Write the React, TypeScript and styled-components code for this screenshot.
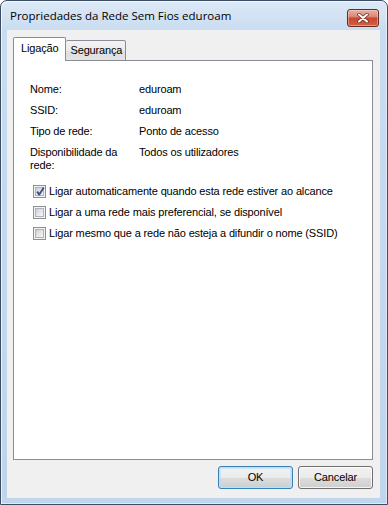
import React from "react";
import styled, { createGlobalStyle } from "styled-components";

const Global = createGlobalStyle`
  html, body { margin: 0; padding: 0; background: #ffffff; }
  body { width: 388px; height: 505px; overflow: hidden; }
  #root { width: 388px; height: 505px; }
`;

const Window = styled.div`
  box-sizing: border-box;
  width: 388px;
  height: 505px;
  border: 1px solid #3a4d63;
  border-radius: 7px 7px 0 0;
  background: linear-gradient(to bottom, #dce9f7 0px, #c9dcf0 30px, #bfd5ec 100%);
  box-shadow: inset 1px 1px 0 rgba(255, 255, 255, 0.7), inset -1px -1px 0 rgba(255, 255, 255, 0.5);
  display: flex;
  flex-direction: column;
  padding: 0 7px 6px 6px;
  font-family: "Liberation Sans", Arial, sans-serif;
  font-size: 11px;
  letter-spacing: -0.15px;
  color: #000;
`;

const TitleBar = styled.div`
  height: 29px;
  display: flex;
  align-items: flex-start;
  justify-content: space-between;
  padding-left: 3px;
`;

const Title = styled.div`
  font-family: "Open Sans", "Noto Sans", sans-serif;
  font-size: 11.5px;
  letter-spacing: 0;
  padding-top: 4px;
  line-height: 21px;
  color: #000;
  white-space: nowrap;
`;

const CloseButton = styled.div`
  box-sizing: border-box;
  width: 32px;
  height: 18px;
  margin-top: 8px;
  margin-right: 1px;
  border: 1px solid #6b2a20;
  border-radius: 3px;
  background: linear-gradient(to bottom, #eab0a2 0%, #d98a78 40%, #c8482f 52%, #d0603f 100%);
  box-shadow: inset 0 0 0 1px rgba(255, 220, 210, 0.45);
  display: flex;
  align-items: center;
  justify-content: center;
`;

const Client = styled.div`
  flex: 1;
  background: #f0f0f0;
  display: flex;
  flex-direction: column;
  padding: 7px 7px 9px 6px;
  min-height: 0;
`;

const TabRow = styled.div`
  height: 24px;
  display: flex;
  align-items: flex-end;
  margin-bottom: -1px;
  position: relative;
  z-index: 1;
`;

const Tab = styled.div<{ $active?: boolean }>`
  box-sizing: border-box;
  height: ${(p) => (p.$active ? "24px" : "21px")};
  padding: ${(p) => (p.$active ? "3px 7px 0 7px" : "2px 3px 0 4px")};
  border: 1px solid #898c95;
  border-bottom: ${(p) => (p.$active ? "none" : "1px solid #898c95")};
  border-left: ${(p) => (p.$active ? "1px solid #898c95" : "none")};
  border-radius: 2px 2px 0 0;
  background: ${(p) =>
    p.$active ? "#ffffff" : "linear-gradient(to bottom, #f3f3f3 0%, #ebebeb 50%, #dedede 51%, #e4e4e4 100%)"};
  line-height: 14px;
  white-space: nowrap;
`;

const Panel = styled.div`
  flex: 1;
  background: #ffffff;
  border: 1px solid #898c95;
  padding: 22px 16px 0 16px;
  display: flex;
  flex-direction: column;
`;

const InfoGrid = styled.div`
  display: grid;
  grid-template-columns: 109px auto;
  row-gap: 8px;
  line-height: 13px;
`;

const Label = styled.div``;
const Value = styled.div``;

const CheckList = styled.div`
  display: flex;
  flex-direction: column;
  gap: 8px;
  margin-top: 13px;
`;

const CheckRow = styled.label`
  display: flex;
  align-items: center;
  gap: 3px;
  height: 13px;
  line-height: 13px;
  padding-left: 3px;
`;

const Box = styled.span`
  box-sizing: border-box;
  width: 13px;
  height: 13px;
  border: 1px solid #8e8f8f;
  background: #f4f4f4;
  padding: 1px;
  display: inline-flex;
  position: relative;
  flex: none;
`;

const BoxInner = styled.span`
  box-sizing: border-box;
  flex: 1;
  border: 1px solid #aeb3b9;
  background: linear-gradient(135deg, #cbcfd5 0%, #e8e9eb 60%, #f6f6f6 100%);
`;

const Mark = styled.svg`
  position: absolute;
  left: 1px;
  top: 0px;
`;

const ButtonRow = styled.div`
  display: flex;
  justify-content: flex-end;
  gap: 5px;
  margin-top: 6px;
`;

const Button = styled.div<{ $default?: boolean }>`
  box-sizing: border-box;
  width: 75px;
  height: 23px;
  border: 1px solid ${(p) => (p.$default ? "#3c7fb1" : "#707070")};
  border-radius: 3px;
  background: linear-gradient(to bottom, #f2f2f2 0%, #ebebeb 50%, #dddddd 51%, #cfcfcf 100%);
  box-shadow: ${(p) =>
    p.$default ? "inset 0 0 0 1px #b7e3f8, inset 0 0 0 2px rgba(170,220,245,0.5)" : "inset 0 0 0 1px rgba(255,255,255,0.75)"};
  display: flex;
  align-items: center;
  justify-content: center;
  line-height: 13px;
`;

const Check: React.FC<{ checked?: boolean; children: React.ReactNode }> = ({ checked, children }) => (
  <CheckRow>
    <Box>
      <BoxInner />
      {checked && (
        <Mark width="11" height="11" viewBox="0 0 11 11">
          <path d="M2.2 5.6 L4.3 8.6 L8.8 1.6" fill="none" stroke="#3d5287" strokeWidth="1.9" strokeLinejoin="round" />
        </Mark>
      )}
    </Box>
    <span>{children}</span>
  </CheckRow>
);

export default function App() {
  return (
    <>
      <Global />
      <Window>
        <TitleBar>
          <Title>Propriedades da Rede Sem Fios eduroam</Title>
          <CloseButton>
            <svg width="12" height="10" viewBox="0 0 12 10">
              <path d="M2 1.5 L10 8.5 M10 1.5 L2 8.5" stroke="#5a2a22" strokeWidth="3.4" strokeLinecap="round" />
              <path d="M2 1.5 L10 8.5 M10 1.5 L2 8.5" stroke="#ffffff" strokeWidth="2" strokeLinecap="round" />
            </svg>
          </CloseButton>
        </TitleBar>
        <Client>
          <TabRow>
            <Tab $active>Ligação</Tab>
            <Tab>Segurança</Tab>
          </TabRow>
          <Panel>
            <InfoGrid>
              <Label>Nome:</Label>
              <Value>eduroam</Value>
              <Label>SSID:</Label>
              <Value>eduroam</Value>
              <Label>Tipo de rede:</Label>
              <Value>Ponto de acesso</Value>
              <Label>
                Disponibilidade da
                <br />
                rede:
              </Label>
              <Value>Todos os utilizadores</Value>
            </InfoGrid>
            <CheckList>
              <Check checked>Ligar automaticamente quando esta rede estiver ao alcance</Check>
              <Check>Ligar a uma rede mais preferencial, se disponível</Check>
              <Check>Ligar mesmo que a rede não esteja a difundir o nome (SSID)</Check>
            </CheckList>
          </Panel>
          <ButtonRow>
            <Button $default>OK</Button>
            <Button>Cancelar</Button>
          </ButtonRow>
        </Client>
      </Window>
    </>
  );
}
